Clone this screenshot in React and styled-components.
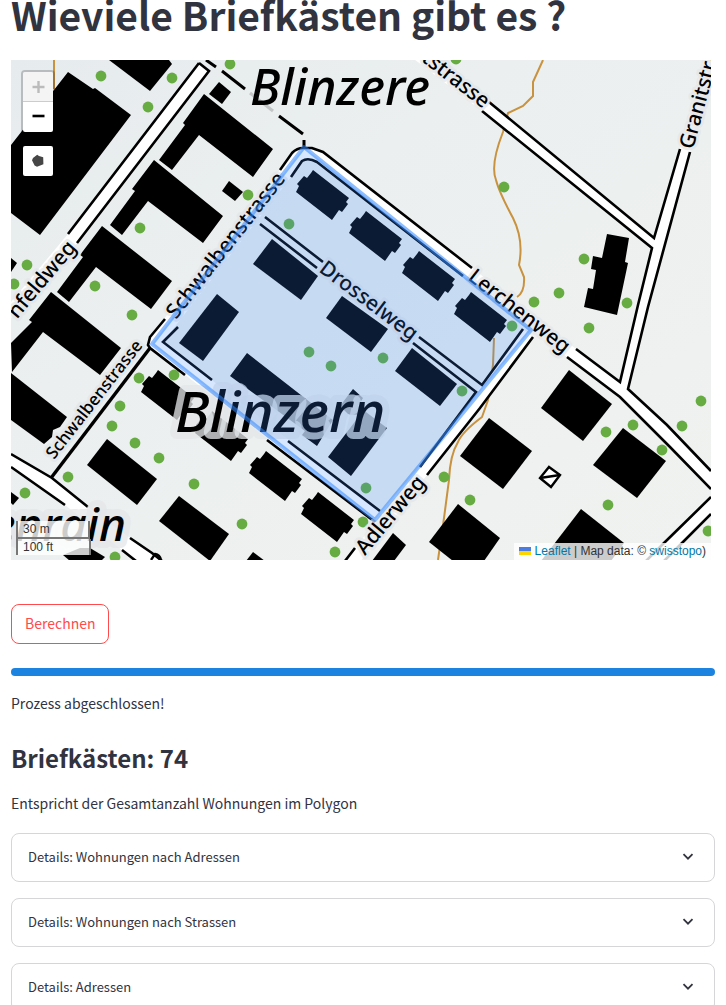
import React from "react";
import styled, { createGlobalStyle } from "styled-components";

const GlobalStyle = createGlobalStyle`
  * { box-sizing: border-box; }
  body {
    margin: 0;
    background: #ffffff;
    color: #31333f;
    font-family: "Noto Sans CJK SC", "Noto Sans", sans-serif;
    font-size: 14px;
    line-height: 24px;
    scrollbar-width: none;
  }
  html { scrollbar-width: none; }
`;

const Page = styled.main`
  display: flex;
  flex-direction: column;
  padding: 0 11px;
`;

const Title = styled.h1`
  margin: 0;
  height: 60px;
  font-size: 39px;
  font-weight: 700;
  line-height: 29px;
  white-space: nowrap;
`;

const MapFrame = styled.section`
  position: relative;
  width: 100%;
  max-width: 700px;
  height: 500px;
  overflow: hidden;
  font-family: "Liberation Sans", Arial, sans-serif;
  font-size: 12px;
`;

const MapDrawing = styled.svg`
  display: block;
  width: 100%;
  height: 100%;
`;

const ControlStack = styled.div`
  position: absolute;
  top: 10px;
  left: 10px;
  display: flex;
  flex-direction: column;
  gap: 10px;
`;

const ControlBar = styled.div`
  display: flex;
  flex-direction: column;
  border: 2px solid rgba(0, 0, 0, 0.2);
  border-radius: 4px;
  background-clip: padding-box;
`;

const MapButton = styled.button`
  display: flex;
  align-items: center;
  justify-content: center;
  width: 30px;
  height: 30px;
  padding: 0;
  border: 0;
  border-bottom: ${(p) => (p.$divided ? "1px solid #cccccc" : "0")};
  border-radius: ${(p) => p.$radius || "2px"};
  background: ${(p) => (p.disabled ? "#f4f4f4" : "#ffffff")};
  color: ${(p) => (p.disabled ? "#bbbbbb" : "#000000")};
`;

const ScaleControl = styled.div`
  position: absolute;
  left: 5px;
  bottom: 5px;
  display: flex;
  flex-direction: column;
`;

const ScaleLine = styled.div`
  width: ${(p) => p.$width};
  height: ${(p) => (p.$lower ? "16px" : "18px")};
  padding: 0 5px;
  border: 2px solid #777777;
  border-top: 0;
  border-bottom-width: ${(p) => (p.$lower ? "0" : "2px")};
  background: rgba(255, 255, 255, 0.8);
  color: #333333;
  line-height: 16px;
`;

const Attribution = styled.div`
  position: absolute;
  right: 0;
  bottom: 0;
  height: 17px;
  padding: 0 5px;
  background: rgba(255, 255, 255, 0.8);
  color: #333333;
  line-height: 17px;
  white-space: nowrap;

  a { color: #0078a8; text-decoration: none; }
`;

const Flag = styled.svg`
  width: 12px;
  height: 8px;
  margin-right: 4px;
`;

const ComputeButton = styled.button`
  align-self: flex-start;
  height: 40px;
  margin-top: 44px;
  padding: 0 13px 2px;
  border: 1px solid #ff4b4b;
  border-radius: 8px;
  background: #ffffff;
  color: #ff4b4b;
  font: inherit;
`;

const Progress = styled.div`
  height: 8px;
  margin-top: 24px;
  overflow: hidden;
  border-radius: 4px;
  background: #f0f2f6;
`;

const ProgressFill = styled.div`
  height: 100%;
  background: #1c83e1;
`;

const Text = styled.p`
  margin: ${(p) => (p.$status ? "15px 0 0" : "0")};
`;

const Heading = styled.h3`
  margin: 25px 0 15px;
  font-size: 24px;
  font-weight: 600;
  line-height: 36px;
`;

const Expanders = styled.div`
  display: flex;
  flex-direction: column;
  gap: 16px;
  margin-top: 18px;
`;

const Expander = styled.details`
  border: 1px solid #d6d6d9;
  border-radius: 8px;
`;

const Summary = styled.summary`
  display: flex;
  align-items: center;
  justify-content: space-between;
  height: 47px;
  padding: 0 16px 2px;
  font-size: 13px;
  list-style: none;
  cursor: pointer;
`;

const Chevron = styled.svg`
  width: 20px;
  height: 20px;
`;

const MapLabel = styled.text`
  font-family: "Noto Sans", "Open Sans", sans-serif;
  font-size: ${(p) => p.$size || "21px"};
  font-weight: 500;
  font-style: ${(p) => (p.$italic ? "italic" : "normal")};
  fill: #000000;
  stroke: ${(p) => (p.$plain ? "none" : "rgba(228, 230, 233, 0.76)")};
  stroke-width: ${(p) => (p.$italic ? "14px" : "6px")};
  stroke-linejoin: round;
  paint-order: stroke;
`;

const buildings = [
  "68,72 93,89 95,88 131,115 40,235 11,213 11,145",
  "109,60 169,60 172,64 150,91",
  "219,82 231,92 222,104 209,94",
  "204,94 273,149 253,177 199,135 172,170 159,160 185,125 183,123",
  "154,160 223,216 203,243 148,201 122,235 110,225 135,191 132,189",
  "102,226 172,281 151,309 96,267 69,302 57,292 83,257 80,255",
  "229,181 243,192 235,201 222,191",
  "51,292 121,348 100,375 43,332 12,372 11,343 32,322 29,320",
  "11,373 67,417 60,427 53,430 52,437 44,444 11,420",
  "11,258 17,263 11,272",
  "11,492 19,498 13,505 11,503",
  "107,439 157,479 137,505 87,465",
  "179,496 229,534 210,561 159,521",
  "80,548 90,548 105,557 101,561 70,561 63,555",
  "272,239 318,276 301,300 253,264",
  "342,296 388,329 371,352 326,318",
  "412,348 457,384 440,406 395,371",
  "217,294 239,312 203,361 179,343",
  "247,353 333,420 317,446 302,435 305,431 230,376",
  "353,389 363,398 358,406 387,428 351,476 328,457 360,415 348,414 340,406",
  "607,234 629,238 625,262 628,263 617,315 584,307 588,288 593,289 596,270 591,269 593,256 602,258",
  "569,370 612,404 583,441 541,408",
  "623,428 666,461 637,498 593,465",
  "489,418 532,451 503,489 460,456",
  "581,509 624,543 611,561 541,561",
  "458,504 500,538 484,561 453,561 429,542",
  "393,533 406,545 394,561 372,561",
  "253,552 265,561 246,561",
];

const notchedAt = [
  [0, 0], [53, 41], [106, 81], [158, 122],
  [-155, 200], [-101, 241], [-47, 281], [5, 322],
];

const trees = [
  [101, 76], [172, 78], [148, 107], [230, 64], [248, 195], [140, 228], [95, 286],
  [27, 265], [14, 284], [132, 315], [139, 378], [174, 375], [120, 406], [112, 426],
  [135, 443], [159, 458], [68, 477], [25, 493], [194, 484], [242, 524], [115, 557],
  [456, 59], [289, 224], [504, 187], [584, 259], [559, 293], [534, 302], [627, 303],
  [309, 352], [331, 366], [383, 358], [462, 391], [366, 488], [363, 522], [335, 552],
  [444, 477], [470, 500], [512, 326], [589, 328], [701, 401], [682, 426], [633, 425],
  [606, 432], [662, 450], [608, 505], [708, 531],
];

const roadFills = [
  "199,63 209,71 77,243 11,318 11,302 68,234",
  "11,455 52,479 88,507 130,538 162,562 137,562 122,550 65,505 11,467",
  "422,50 489,102 654,238 652,248 482,111 410,56",
  "711,60 690,152 648,307 628,389 620,384 638,305 652,248 654,238 680,149 704,56",
  "472,268 576,349 620,382 628,389 667,425 711,471 711,489 670,447 620,397 567,357 463,276",
  "711,497 664,543 645,562 662,562 682,543 711,514",
  "280,170 292,153 303,148 323,152 472,268 463,276 317,162 308,159 302,161 291,177 163,342 380,511 420,467 482,385 523,329 533,337 480,408 427,475 360,562 345,562 375,522 148,346 150,337",
];

const roadLines = [
  "M199 63L209 71L77 243M199 63L68 234",
  "M11 454L52 478L88 507M130 538L152 553L162 561M11 467L65 505M122 550L136 561",
  "M489 102L654 238L680 149M482 111L652 248L638 305L620 382L576 349M690 152L648 307L628 389L667 425L711 471M567 357L620 397L670 447L711 489",
  "M711 497L664 543L646 561M711 514L682 543L664 561",
  "M280 170L292 153Q297 148 303 148L312 148L323 152L472 268M291 177L302 161Q308 157 317 162L463 276",
  "M165 319L150 337L148 345L150 348L185 375M178 327L163 342L212 380M267 440L375 522M288 441L380 511",
  "M523 329L482 385L419 337M413 343L476 392L420 467M533 337L480 408L427 475M355 548L345 561",
  "M265 217L323 262M260 224L317 268",
];

const streetLabels = [
  { text: "nfeldweg", x: 77, y: 248, angle: -50, anchor: "end" },
  { text: "Schwalbenstrasse", x: 176, y: 320, angle: -52 },
  { text: "Schwalbenstrasse", x: 54, y: 460, angle: -52, size: "17px" },
  { text: "tstrasse", x: 483, y: 109, angle: 38, anchor: "end" },
  { text: "Granitstra", x: 693, y: 150, angle: -75 },
  { text: "Lerchenweg", x: 467, y: 279, angle: 38 },
  { text: "Drosselweg", x: 318, y: 271, angle: 37 },
  { text: "Adlerweg", x: 365, y: 556, angle: -50 },
];

function SurveyMap() {
  return (
    <MapDrawing viewBox="11 60 700 500" preserveAspectRatio="xMinYMin slice" role="img" aria-label="Karte Blinzern">
      <defs>
        <linearGradient id="terrain" x1="0" y1="0" x2="1" y2="1">
          <stop offset="0" stopColor="#e6ebee" />
          <stop offset="0.35" stopColor="#ebefef" />
          <stop offset="1" stopColor="#f0f2f0" />
        </linearGradient>
      </defs>
      <rect x="11" y="60" width="700" height="500" fill="url(#terrain)" />
      <g fill="none" stroke="#c8923f" strokeWidth="2">
        <path d="M54 60V89" />
        <path d="M543 60L533 82V96L523 106L508 113L503 132Q490 165 496 180Q499 192 513 218Q524 240 519 265L524 277Q525 292 517 297" />
        <path d="M494 338L493 365L488 400L482 417Q462 432 458 442Q450 455 449 480L444 518L438 560" />
      </g>
      <g fill="#66ac42">
        {trees.map(([x, y]) => <circle key={`${x}-${y}`} cx={x} cy={y} r="5.4" />)}
      </g>
      <g fill="#ffffff">
        {roadFills.map((points) => <polygon key={points} points={points} />)}
        <polygon points="265,217 482,385 476,392 260,224" fill="#eef1f3" />
      </g>
      <g fill="none" stroke="#000000" strokeWidth="2.6">
        {roadLines.map((d) => <path key={d} d={d} />)}
        <path d="M150 348L51 478" strokeWidth="3.4" />
        <path d="M206 60L216 67M222 71L245 89M279 116L303 134M304 140V149" strokeWidth="3" />
        <path d="M250 93L273 111" stroke="#c3c5c6" strokeWidth="3" />
      </g>
      <g>
        {buildings.map((points) => <polygon key={points} points={points} />)}
        {notchedAt.map(([x, y]) => (
          <polygon
            key={`${x}-${y}`}
            transform={`translate(${x} ${y})`}
            points="313,170 349,198 346,202 348,204 342,212 339,210 332,220 296,192 299,186 297,184 304,176 307,178 311,173"
          />
        ))}
      </g>
      <g fill="#ffffff" stroke="#000000" strokeWidth="2.4">
        <polygon points="549,467 560,475 551,487 540,478" />
        <path d="M540 478L560 475" />
      </g>
      {streetLabels.map((l) => (
        <MapLabel
          key={`${l.text}-${l.x}`}
          $size={l.size}
          textAnchor={l.anchor || "start"}
          transform={`translate(${l.x} ${l.y}) rotate(${l.angle})`}
        >
          {l.text}
        </MapLabel>
      ))}
      <path d="M151 560L155 554Q160 555 161 560" fill="none" stroke="#000000" strokeWidth="2.4" />
      <MapLabel $italic $size="50px" $plain x="250" y="105">Blinzere</MapLabel>
      <MapLabel $italic $size="57px" x="175" y="432">Blinzern</MapLabel>
      <MapLabel $italic $size="46px" textAnchor="end" x="126" y="541">enrain</MapLabel>
      <polygon
        points="304,147 531,330 375,520 152,344"
        fill="#3388ff"
        fillOpacity="0.2"
        stroke="#3388ff"
        strokeOpacity="0.55"
        strokeWidth="4"
        strokeLinejoin="round"
      />
    </MapDrawing>
  );
}

function ExpanderRow({ label }) {
  return (
    <Expander>
      <Summary>
        {label}
        <Chevron viewBox="0 0 20 20" fill="none" stroke="#31333f" strokeWidth="1.8" aria-hidden="true">
          <path d="M5.5 7.2L10 11.7L14.5 7.2" />
        </Chevron>
      </Summary>
    </Expander>
  );
}

export default function App() {
  return (
    <>
      <GlobalStyle />
      <Page>
        <Title>Wieviele Briefkästen gibt es ?</Title>
        <MapFrame>
          <SurveyMap />
          <ControlStack>
            <ControlBar>
              <MapButton disabled $divided $radius="2px 2px 0 0" aria-label="Zoom in">
                <svg width="14" height="14" stroke="currentColor" strokeWidth="2.4" aria-hidden="true">
                  <path d="M1.5 7H13.5M7.5 1V13" />
                </svg>
              </MapButton>
              <MapButton $radius="0 0 2px 2px" aria-label="Zoom out">
                <svg width="14" height="14" stroke="currentColor" strokeWidth="2.6" aria-hidden="true">
                  <path d="M1.5 6H13.5" />
                </svg>
              </MapButton>
            </ControlBar>
            <ControlBar>
              <MapButton aria-label="Draw a polygon">
                <svg width="14" height="14" fill="#464646" aria-hidden="true">
                  <path d="M6.2 0.8L8 2L12.2 3.2L12.4 10.2L6 12.8L3.6 11.6L1 6.2L2 4Z" />
                </svg>
              </MapButton>
            </ControlBar>
          </ControlStack>
          <ScaleControl>
            <ScaleLine $width="74px">30 m</ScaleLine>
            <ScaleLine $width="75px" $lower>100 ft</ScaleLine>
          </ScaleControl>
          <Attribution>
            <a href="#leaflet">
              <Flag viewBox="0 0 12 8" aria-hidden="true">
                <path fill="#4c7be1" d="M0 0h12v4H0z" />
                <path fill="#ffd500" d="M0 4h12v4H0z" />
              </Flag>
              Leaflet
            </a>
            {" | Map data: © "}
            <a href="#swisstopo">swisstopo</a>)
          </Attribution>
        </MapFrame>
        <ComputeButton type="button">Berechnen</ComputeButton>
        <Progress role="progressbar" aria-label="Fortschritt" aria-valuenow={100}>
          <ProgressFill />
        </Progress>
        <Text $status>Prozess abgeschlossen!</Text>
        <Heading>Briefkästen: 74</Heading>
        <Text>Entspricht der Gesamtanzahl Wohnungen im Polygon</Text>
        <Expanders>
          <ExpanderRow label="Details: Wohnungen nach Adressen" />
          <ExpanderRow label="Details: Wohnungen nach Strassen" />
          <ExpanderRow label="Details: Adressen" />
        </Expanders>
      </Page>
    </>
  );
}
